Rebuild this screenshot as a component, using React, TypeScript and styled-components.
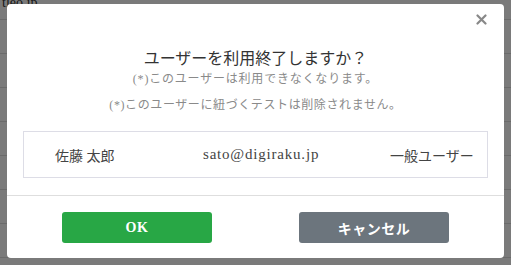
import React from 'react';
import styled, { createGlobalStyle } from 'styled-components';

const GlobalStyle = createGlobalStyle`
  html, body {
    margin: 0;
    padding: 0;
    width: 511px;
    height: 265px;
    overflow: hidden;
    background: #fff;
    font-family: 'Liberation Serif', 'Noto Sans CJK JP', serif;
  }
`;

const Page = styled.div`
  width: 511px;
  height: 265px;
  display: flex;
  flex-direction: column;
  color: #333;
  font-size: 14px;
`;

const PageRow = styled.div<{ $first?: boolean }>`
  height: 33px;
  flex-shrink: 0;
  border-bottom: 1px solid #ddd;
  padding-left: 2px;
  display: flex;
  align-items: center;
  margin-top: ${(p) => (p.$first ? '-14px' : '0')};
`;

const Backdrop = styled.div`
  position: fixed;
  inset: 0;
  background: rgba(0, 0, 0, 0.52);
  padding: 4px 7px 0 7px;
`;

const Dialog = styled.div`
  width: 497px;
  height: 254px;
  background: #fff;
  border-radius: 4px;
  display: flex;
  flex-direction: column;
  position: relative;
`;

const Close = styled.button`
  position: absolute;
  top: 5px;
  right: 13px;
  border: 0;
  background: none;
  padding: 0;
  width: 20px;
  height: 20px;
  display: flex;
  align-items: center;
  justify-content: center;
  cursor: pointer;
`;

const Body = styled.div`
  display: flex;
  flex-direction: column;
  align-items: center;
  padding: 44px 16px 0 16px;
  flex-shrink: 0;
`;

const Title = styled.h2`
  margin: 0;
  font-size: 16px;
  font-weight: normal;
  color: #333;
  line-height: 22px;
`;

const Note = styled.p<{ $gap?: number; $spacing?: number }>`
  margin: ${(p) => `${p.$gap ?? 0}px 0 0 0`};
  font-size: 12px;
  color: #8a8a8a;
  line-height: 16px;
  letter-spacing: ${(p) => p.$spacing ?? 0.6}px;
`;

const InfoBox = styled.div`
  align-self: stretch;
  flex-shrink: 0;
  margin-top: 18px;
  height: 47px;
  box-sizing: border-box;
  border: 1px solid #dddde6;
  display: grid;
  grid-template-columns: 148px 187px auto;
  align-items: center;
  padding-left: 31px;
  font-size: 14px;
  color: #444;
`;

const Email = styled.span`
  font-size: 15px;
  letter-spacing: 0.8px;
`;

const Footer = styled.div`
  margin-top: 17px;
  border-top: 1px solid #dedede;
  flex: 1;
  display: flex;
  justify-content: center;
  gap: 87px;
  padding-top: 16px;
`;

const Button = styled.button<{ $variant: 'ok' | 'cancel' }>`
  width: 150px;
  height: 31px;
  border: 0;
  border-radius: 3px;
  color: #fff;
  font-family: inherit;
  font-size: 14px;
  font-weight: bold;
  letter-spacing: 0.5px;
  background: ${(p) => (p.$variant === 'ok' ? '#28a745' : '#6c757d')};
  cursor: pointer;
`;

const rows = ['tleo.jp', '', '', '', '', '', '', ''];

export default function App() {
  return (
    <>
      <GlobalStyle />
      <Page>
        {rows.map((r, i) => (
          <PageRow key={i} $first={i === 0}>
            {r}
          </PageRow>
        ))}
      </Page>
      <Backdrop>
        <Dialog>
          <Close aria-label="close">
            <svg width="11" height="11" viewBox="0 0 11 11">
              <path d="M1.5 1.5 L9.5 9.5 M9.5 1.5 L1.5 9.5" stroke="#888" strokeWidth="2.2" strokeLinecap="round" />
            </svg>
          </Close>
          <Body>
            <Title>ユーザーを利用終了しますか？</Title>
            <Note $gap={1} $spacing={0.8}>(*)このユーザーは利用できなくなります。</Note>
            <Note $gap={10} $spacing={0.6}>(*)このユーザーに紐づくテストは削除されません。</Note>
            <InfoBox>
              <span>佐藤 太郎</span>
              <Email>sato@digiraku.jp</Email>
              <span>一般ユーザー</span>
            </InfoBox>
          </Body>
          <Footer>
            <Button $variant="ok">OK</Button>
            <Button $variant="cancel">キャンセル</Button>
          </Footer>
        </Dialog>
      </Backdrop>
    </>
  );
}
